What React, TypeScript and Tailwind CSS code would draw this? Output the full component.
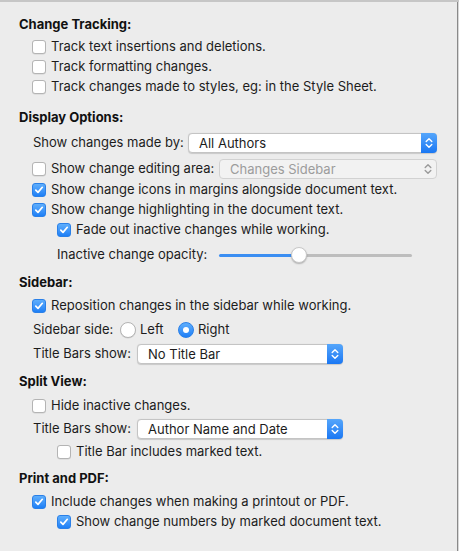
import React from "react";

const font = { fontFamily: "Inter, 'Liberation Sans', Arial, sans-serif" };

function Checkbox({ checked }: { checked?: boolean }) {
  if (checked) {
    return (
      <div className="w-[14px] h-[14px] rounded-[3px] bg-gradient-to-b from-[#5eaefc] to-[#1c7ff6] border border-[#2a80e8] flex items-center justify-center shrink-0">
        <svg width="10" height="10" viewBox="0 0 10 10">
          <path d="M1.8 5.2 L4 7.4 L8.3 2.3" fill="none" stroke="white" strokeWidth="1.7" strokeLinecap="round" strokeLinejoin="round" />
        </svg>
      </div>
    );
  }
  return <div className="w-[14px] h-[14px] rounded-[3px] bg-white border border-[#b4b4b4] shadow-[0_0.5px_0.5px_rgba(0,0,0,0.12)] shrink-0" />;
}

function Radio({ checked }: { checked?: boolean }) {
  if (checked) {
    return (
      <div className="w-[16px] h-[16px] rounded-full bg-gradient-to-b from-[#5eaefc] to-[#1c7ff6] border border-[#2a80e8] flex items-center justify-center shrink-0">
        <div className="w-[6px] h-[6px] rounded-full bg-white" />
      </div>
    );
  }
  return <div className="w-[16px] h-[16px] rounded-full bg-white border border-[#b4b4b4] shadow-[0_0.5px_0.5px_rgba(0,0,0,0.12)] shrink-0" />;
}

function Stepper({ disabled }: { disabled?: boolean }) {
  const color = disabled ? "#9a9a9a" : "white";
  return (
    <div
      className={
        disabled
          ? "w-[16px] h-full flex items-center justify-center shrink-0"
          : "w-[16px] h-[calc(100%+2px)] -my-px -mr-px rounded-r-[4px] bg-gradient-to-b from-[#55a6fb] to-[#1977f3] flex items-center justify-center shrink-0"
      }
    >
      <svg width="10" height="16" viewBox="0 0 10 16">
        <path d="M2.2 6.5 L5 3.7 L7.8 6.5" fill="none" stroke={color} strokeWidth="1.4" strokeLinecap="round" strokeLinejoin="round" />
        <path d="M2.2 9.5 L5 12.3 L7.8 9.5" fill="none" stroke={color} strokeWidth="1.4" strokeLinecap="round" strokeLinejoin="round" />
      </svg>
    </div>
  );
}

function Select({ label, width, disabled }: { label: string; width: string; disabled?: boolean }) {
  return (
    <div
      className={
        (disabled
          ? "bg-[#f2f2f2] border-[#d2d2d2] text-[#9c9c9c] "
          : "bg-white border-[#c4c4c4] text-[#1c1c1c] shadow-[0_0.5px_1px_rgba(0,0,0,0.15)] ") +
        "h-[20px] border rounded-[4px] flex items-center " +
        width
      }
    >
      <div className="flex-1 pl-[10px] text-[13px] leading-[18px] whitespace-nowrap overflow-hidden">{label}</div>
      <Stepper disabled={disabled} />
    </div>
  );
}

function Heading({ children, mt }: { children: React.ReactNode; mt: string }) {
  return (
    <div className={"h-[20px] flex items-center pl-[19px] text-[13px] font-bold text-[#111] " + mt}>{children}</div>
  );
}

function CheckRow({ label, checked, indent, mt }: { label: string; checked?: boolean; indent?: boolean; mt?: string }) {
  return (
    <div className={"h-[20px] flex items-center gap-[5px] " + (indent ? "pl-[57px] " : "pl-[32px] ") + (mt || "")}>
      <Checkbox checked={checked} />
      <span className="text-[13px] text-[#1c1c1c] whitespace-nowrap">{label}</span>
    </div>
  );
}

export default function App() {
  return (
    <div className="w-[459px] h-[551px] bg-[#ececec] overflow-hidden flex flex-col" style={font}>
      <div className="h-[2px] bg-[#c6c6c6] shrink-0" />
      <div className="flex flex-1">
        <div className="w-[457px] flex flex-col">
          <Heading mt="mt-[13px]">Change Tracking:</Heading>
          <CheckRow label="Track text insertions and deletions." mt="mt-[2px]" />
          <CheckRow label="Track formatting changes." />
          <CheckRow label="Track changes made to styles, eg: in the Style Sheet." />

          <Heading mt="mt-[11px]">Display Options:</Heading>
          <div className="h-[20px] flex items-center pl-[33px] mt-[5px]">
            <span className="w-[155px] text-[13px] text-[#1c1c1c] whitespace-nowrap">Show changes made by:</span>
            <Select label="All Authors" width="w-[249px]" />
          </div>
          <div className="h-[20px] flex items-center pl-[32px] mt-[6px]">
            <div className="w-[187px] flex items-center gap-[5px]">
              <Checkbox />
              <span className="text-[13px] text-[#1c1c1c] whitespace-nowrap">Show change editing area:</span>
            </div>
            <Select label="Changes Sidebar" width="w-[218px]" disabled />
          </div>
          <CheckRow label="Show change icons in margins alongside document text." checked mt="mt-[1px]" />
          <CheckRow label="Show change highlighting in the document text." checked />
          <CheckRow label="Fade out inactive changes while working." checked indent />
          <div className="h-[20px] flex items-center pl-[57px] mt-[5px]">
            <span className="w-[162px] text-[13px] text-[#1c1c1c] whitespace-nowrap">Inactive change opacity:</span>
            <div className="relative w-[193px] h-[20px] flex items-center">
              <div className="h-[3px] w-[80px] bg-[#3b8ef2] rounded-l-full" />
              <div className="h-[3px] flex-1 bg-[#bdbdbd] rounded-r-full" />
              <div className="absolute left-[72px] top-[2px] w-[16px] h-[16px] rounded-full bg-white border border-[#c8c8c8] shadow-[0_1px_1.5px_rgba(0,0,0,0.25)]" />
            </div>
          </div>

          <Heading mt="mt-[8px]">Sidebar:</Heading>
          <CheckRow label="Reposition changes in the sidebar while working." checked mt="mt-[3px]" />
          <div className="h-[20px] flex items-center pl-[33px] mt-[4px]">
            <span className="w-[87px] text-[13px] text-[#1c1c1c] whitespace-nowrap">Sidebar side:</span>
            <div className="w-[58px] flex items-center gap-[4px]">
              <Radio />
              <span className="text-[13px] text-[#1c1c1c]">Left</span>
            </div>
            <div className="flex items-center gap-[4px]">
              <Radio checked />
              <span className="text-[13px] text-[#1c1c1c]">Right</span>
            </div>
          </div>
          <div className="h-[20px] flex items-center pl-[33px] mt-[4px]">
            <span className="w-[104px] text-[13px] text-[#1c1c1c] whitespace-nowrap">Title Bars show:</span>
            <Select label="No Title Bar" width="w-[206px]" />
          </div>

          <Heading mt="mt-[8px]">Split View:</Heading>
          <CheckRow label="Hide inactive changes." mt="mt-[4px]" />
          <div className="h-[20px] flex items-center pl-[33px] mt-[3px]">
            <span className="w-[104px] text-[13px] text-[#1c1c1c] whitespace-nowrap">Title Bars show:</span>
            <Select label="Author Name and Date" width="w-[206px]" />
          </div>
          <CheckRow label="Title Bar includes marked text." indent mt="mt-[3px]" />

          <Heading mt="mt-[7px]">Print and PDF:</Heading>
          <CheckRow label="Include changes when making a printout or PDF." checked mt="mt-[3px]" />
          <CheckRow label="Show change numbers by marked document text." checked indent />
        </div>
        <div className="w-[1px] bg-[#8a8a8a]" />
        <div className="w-[1px] bg-[#d8d8d8]" />
      </div>
    </div>
  );
}
